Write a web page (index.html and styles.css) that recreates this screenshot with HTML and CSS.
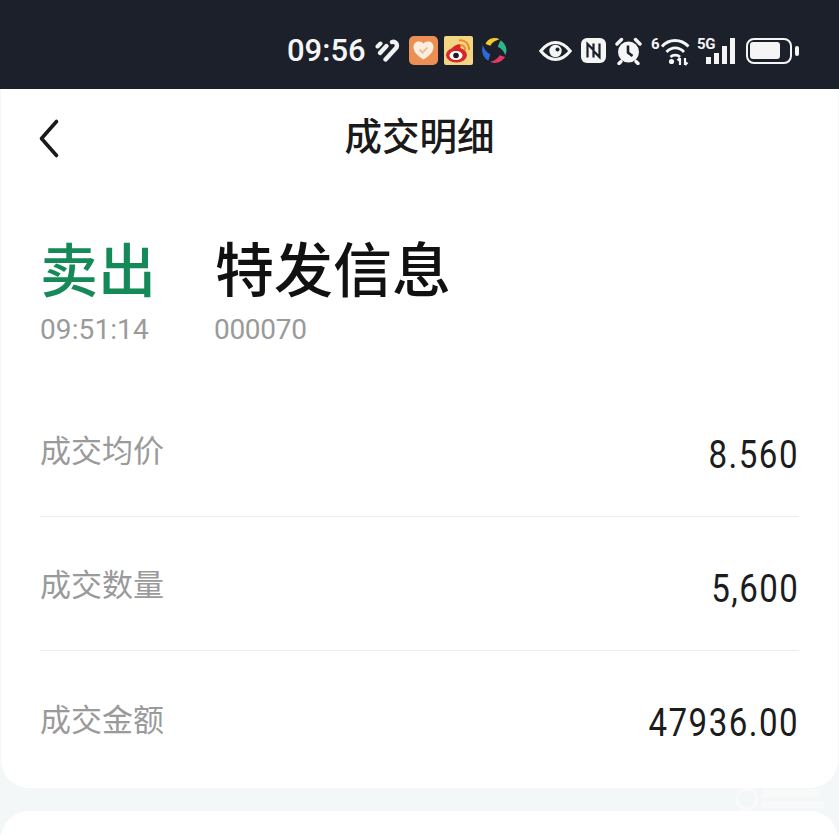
FILE: index.html
```html
<!DOCTYPE html>
<html lang="zh-CN">
<head>
<meta charset="utf-8">
<title>成交明细</title>
<link rel="stylesheet" href="styles.css">
</head>
<body>
<div class="status">
  <span class="time">09:56</span>
  <svg class="ic heart-stripe" width="25" height="24" viewBox="0 0 25 24"><g fill="none" stroke="#f2f2f2" stroke-linecap="round"><path d="M2.500 7.500 L5.500 4.500" stroke-width="4"/><path d="M5 14 L11.500 7" stroke-width="4.400"/><path d="M10.500 20.500 L21.500 8.500 C23 5 20 2 17 3" stroke-width="4.400"/></g></svg>
  <svg class="ic app-a" width="29" height="29" viewBox="0 0 29 29"><rect width="29" height="29" rx="5" fill="#ec8f55"/><path d="M14.500 23.500 C8 19.500 4.500 15.500 4.500 11 C4.500 7.500 7 5.500 10 5.500 C12 5.500 13.500 6.300 14.500 7.500 C15.500 6.300 17 5.500 19 5.500 C22 5.500 24.500 7.500 24.500 11 C24.500 15.500 21 19.500 14.500 23.500Z" fill="#fbeede"/><path d="M10.500 13.500 L13.500 16.500 L18.500 11.500" fill="none" stroke="#e8c19c" stroke-width="2"/></svg>
  <svg class="ic app-b" width="29" height="29" viewBox="0 0 29 29"><rect width="29" height="29" rx="2" fill="#f3d583"/><ellipse cx="12.500" cy="19" rx="10.500" ry="7.500" fill="#d8262a"/><path d="M16 12 C19 8 14 6 8 12 Z" fill="#d8262a"/><ellipse cx="12" cy="19.500" rx="6.500" ry="4.500" fill="#fff"/><circle cx="12" cy="19.500" r="2.800" fill="#1c1c1c"/><path d="M15 4.500 C21 3.500 25.500 8 25 14" fill="none" stroke="#ef8b2c" stroke-width="2"/><path d="M16 9 C19 8.500 21.500 11 21 14" fill="none" stroke="#ef8b2c" stroke-width="2"/></svg>
  <svg class="ic app-c" width="28" height="29" viewBox="0 0 30 30"><path d="M6 8 C8 2 16 0 21 3 C17 4 13 6 11 10Z" fill="#f3c92f"/><path d="M22 4 C28 8 30 15 27 20 C26 16 23 13 19 11Z" fill="#2fb58a"/><path d="M27 22 C23 28 16 30 11 27 C15 26 19 24 21 20Z" fill="#e23a63"/><path d="M9 26 C3 22 1 16 3 9 C5 14 7 17 11 19Z" fill="#2b69d8"/></svg>
  <svg class="ic eye" width="33" height="20" viewBox="0 0 33 20"><path d="M1.800 10 C7 3.500 11.500 1.600 16.500 1.600 C21.500 1.600 26 3.500 31.200 10 C26 16.500 21.500 18.400 16.500 18.400 C11.500 18.400 7 16.500 1.800 10Z" fill="none" stroke="#f5f5f5" stroke-width="3"/><circle cx="16.500" cy="10" r="6.200" fill="#f5f5f5"/><circle cx="18.500" cy="8.500" r="2" fill="#1b202b"/></svg>
  <svg class="ic nfc" width="25" height="25" viewBox="0 0 25 25"><rect width="25" height="25" rx="6" fill="#f5f5f5"/><path d="M6.500 19.500 V6 L12.500 12 V19.500 M12.500 5.500 V13 L18.500 19 V5.500" fill="none" stroke="#1b202b" stroke-width="2.200"/></svg>
  <svg class="ic alarm" width="27" height="28" viewBox="0 0 27 28"><path d="M2 7 L6.500 2.500 M25 7 L20.500 2.500 M6 24.500 L4 26.500 M21 24.500 L23 26.500" stroke="#f5f5f5" stroke-width="3.400" stroke-linecap="round"/><circle cx="13.500" cy="15" r="10.500" fill="#f5f5f5"/><path d="M13 8.500 V15.500 L17.500 19" fill="none" stroke="#1b202b" stroke-width="2.600"/></svg>
  <div class="wifi">
    <span class="sup">6</span>
    <svg width="29" height="28" viewBox="0 0 29 28"><g fill="none" stroke="#f5f5f5" stroke-width="2.800"><path d="M1 8.500 C8 0.500 20 0.500 27.500 8.500"/><path d="M5.500 14 C10.500 8.500 18 8.500 23 14"/><path d="M9.500 19 C12 16.500 16.500 16.500 19 19"/></g><circle cx="10.500" cy="23.500" r="2.600" fill="#f5f5f5"/><path d="M19 27 V20 M19 20 L16.500 22.500 M24 20 V27 M24 27 L26.500 24.500" fill="none" stroke="#f5f5f5" stroke-width="2.200"/></svg>
  </div>
  <div class="signal">
    <span class="sup">5G</span>
    <div class="bars"><i class="b1"></i><i class="b2"></i><i class="b3"></i><i class="b4"></i></div>
  </div>
  <div class="battery"><div class="shell"><div class="fill"></div></div><i class="cap"></i></div>
</div>

<main class="card">
  <header class="nav">
    <svg class="back" width="24" height="42" viewBox="0 0 24 42"><path d="M18.500 4.500 L3.500 21.500 L18.500 38.500" fill="none" stroke="#1a1a1a" stroke-width="3.600" stroke-linecap="round" stroke-linejoin="round"/></svg>
    <h1>成交明细</h1>
  </header>
  <section class="head">
    <div class="side">
      <div class="sell">卖出</div>
      <div class="sub sub-time">09:51:14</div>
    </div>
    <div>
      <div class="name">特发信息</div>
      <div class="sub sub-code">000070</div>
    </div>
  </section>
  <section class="rows">
    <div class="row"><span class="label">成交均价</span><span class="value">8.560</span></div>
    <div class="row"><span class="label">成交数量</span><span class="value">5,600</span></div>
    <div class="row"><span class="label">成交金额</span><span class="value">47936.00</span></div>
  </section>
</main>
<div class="next"></div>
<svg class="mark" width="90" height="26" viewBox="0 0 90 26"><circle cx="12" cy="13" r="10" fill="none" stroke="#fff" stroke-width="2.500"/><rect x="27" y="3" width="58" height="9" fill="#fff" opacity=".7"/><rect x="27" y="15" width="62" height="7" fill="#fff" opacity=".6"/></svg>
</body>
</html>
```
FILE: styles.css
```css
* { box-sizing: border-box; }
html, body { margin: 0; height: 835px; overflow: hidden; }
body {
  background: #f4f7f8;
  font-family: "Noto Sans CJK SC", "Noto Sans", sans-serif;
  position: relative;
}
.status {
  height: 89px;
  background: #1b202b;
  display: flex;
  align-items: center;
  padding: 12px 0 0 287px;
  color: #f5f5f5;
}
.ic { flex: none; display: block; }
.time { font: 500 31px/1 Roboto, sans-serif; width: 85px; }
.heart-stripe { margin-left: 3px; }
.app-a { margin-left: 9px; }
.app-b { margin-left: 6px; }
.app-c { margin-left: 7px; }
.eye { margin-left: 31px; }
.nfc { margin-left: 9px; }
.alarm { margin-left: 9px; }
.wifi { display: flex; align-items: flex-start; height: 28px; margin-left: 9px; }
.wifi svg { margin-left: 2px; margin-top: 1px; }
.sup { font: 700 15px/1 Roboto, sans-serif; letter-spacing: -.5px; }
.signal { display: flex; margin-left: 7px; align-items: flex-start; height: 28px; }
.bars { display: flex; align-items: flex-end; gap: 3px; height: 27px; margin-left: -9px; }
.bars i { width: 5px; background: #f5f5f5; display: block; }
.b1 { height: 7px; }
.b2 { height: 11px; }
.b3 { height: 18px; }
.b4 { height: 26px; }
.battery { display: flex; align-items: center; margin-left: 11px; }
.shell { width: 46px; height: 26px; border: 2.500px solid #f5f5f5; border-radius: 8px; padding: 2.500px; }
.fill { width: 30px; height: 100%; background: #f5f5f5; border-radius: 3px; }
.cap { width: 4px; height: 10px; background: #f5f5f5; margin-left: 3px; border-radius: 2px; }

.card {
  height: 699px;
  margin: 0 1px;
  background: #fff;
  border-radius: 0 0 28px 28px;
  padding: 0 39px;
}
.nav { height: 96px; position: relative; display: flex; align-items: center; justify-content: center; padding-bottom: 6px; }
.nav h1 { margin: 0; font-size: 37.500px; font-weight: 500; color: #1a1a1a; line-height: 1; }
.back { position: absolute; left: -2px; top: 28px; }
.head { display: flex; gap: 59px; margin-top: 48px; }
.side { width: 116px; }
.sell { font-size: 58px; font-weight: 500; line-height: 68px; color: #158a58; }
.name { font-size: 59px; font-weight: 500; line-height: 68px; color: #111; }
.sub { font: 400 28px/34px Roboto, sans-serif; color: #9a9a9a; margin-top: 12px; }
.sub-time { letter-spacing: .1px; }
.sub-code { letter-spacing: -.3px; margin-left: -1px; }
.rows { margin-top: 36px; }
.row {
  height: 134px;
  display: flex;
  align-items: center;
  justify-content: space-between;
  border-bottom: 1px solid #ececec;
}
.row:last-child { border-bottom: 0; }
.label { font-size: 31px; color: #9a9a9a; padding-bottom: 2px; }
.value { font: 400 38px/1 Roboto, sans-serif; color: #1c1c1c; letter-spacing: 1.700px; padding-top: 10px; transform: scaleX(.87); transform-origin: right center; }
.next { height: 40px; margin: 23px 1px 0; background: #fff; border-radius: 28px 28px 0 0; }
.mark { position: absolute; left: 735px; top: 786px; opacity: .5; }
```
